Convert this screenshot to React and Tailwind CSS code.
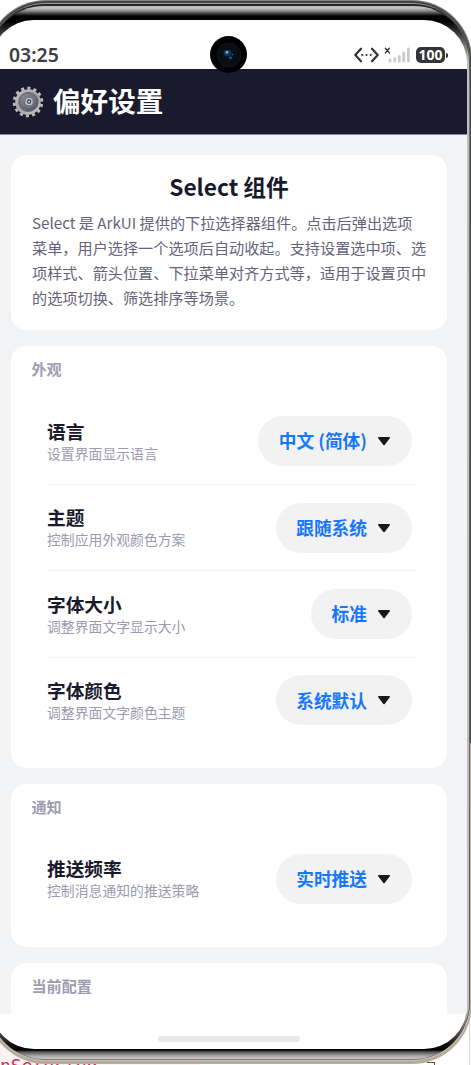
import React from "react";

function Gear() {
  return (
    <svg className="h-8 w-8 shrink-0" viewBox="0 0 32 32">
      <defs>
        <linearGradient id="rim" x1="0" y1="0" x2="1" y2="1">
          <stop offset="0" stopColor="#c5c3c4" />
          <stop offset="0.5" stopColor="#a5a3a5" />
          <stop offset="1" stopColor="#c9c5c5" />
        </linearGradient>
        <linearGradient id="plate" x1="0" y1="0" x2="1" y2="1">
          <stop offset="0" stopColor="#8f929b" />
          <stop offset="1" stopColor="#4a5161" />
        </linearGradient>
      </defs>
      <g transform="rotate(8 16 16)">
        <circle cx="16" cy="16" r="13.8" fill="none" stroke="#bdb9b9" strokeWidth="3" strokeDasharray="3.1 3.1" />
        <circle cx="16" cy="16" r="11.4" fill="#777b86" stroke="url(#rim)" strokeWidth="2.8" />
        <ellipse cx="16.8" cy="15.8" rx="9.4" ry="9.1" fill="url(#plate)" stroke="#5b5e69" strokeWidth="0.8" />
        <circle cx="16.6" cy="15.5" r="5.8" fill="none" stroke="#777c89" strokeWidth="1" />
        <circle cx="17" cy="15.5" r="3" fill="#3f4553" stroke="#c5c7cd" strokeWidth="1.4" />
        <circle cx="17" cy="15.5" r="1" fill="#e4e4e8" />
      </g>
    </svg>
  );
}

function StatusIcons() {
  return (
    <div className="flex items-center">
      <svg className="h-4 w-[25px]" viewBox="0 0 25 16" fill="none" stroke="#333436" strokeWidth="2.2" strokeLinecap="round" strokeLinejoin="round">
        <path d="M7 1.7 1.3 8 7 14.3M18 1.7 23.7 8 18 14.3" />
        <path d="M8.3 8h.01M12.5 8h.01M16.7 8h.01" strokeWidth="2.2" />
      </svg>
      <svg className="ml-[5px] h-4 w-[26px]" viewBox="0 0 26 16" fill="none" strokeLinecap="round">
        <path d="m1.4 1.3 4 4.6M5.4 1.3l-4 4.6" stroke="#333436" strokeWidth="1.4" />
        <path d="M6 13v1.2M10.8 11.6v2.6M15.3 9.3v4.9M19.7 5.8v8.4M24.4 2v12.2" stroke="#cacaca" strokeWidth="2.8" />
      </svg>
      <div className="ml-[6px] flex h-4 w-[29px] items-center justify-center rounded-[5px] bg-[#333436] font-['Noto_Sans',sans-serif] text-[14px] leading-none font-bold text-white">100</div>
      <div className="ml-px h-[5px] w-[2px] rounded-r bg-[#333436]" />
    </div>
  );
}

function Card({ title, className = "", children }) {
  return (
    <section className={`rounded-[15px] bg-white ${className}`}>
      <h3 className="px-[20.5px] pt-[11px] text-[15.1px] leading-[23px] font-bold text-[#9e9cb0]">{title}</h3>
      {children}
    </section>
  );
}

function Row({ label, hint, value, divided }) {
  return (
    <div className={`mr-[31px] ml-[36px] flex h-[86.4px] items-center justify-between border-b pr-[4px] ${divided ? "border-[#f3f3f5]" : "border-transparent"}`}>
      <div className="flex flex-col">
        <span className="mb-[2px] text-[18.7px] leading-[21px] font-bold text-[#1a1a2e]">{label}</span>
        <span className="text-[13.85px] leading-[20px] text-[#9c9aae]">{hint}</span>
      </div>
      <button className="flex h-[50px] items-center gap-[10px] rounded-full bg-[#f2f2f2] pr-[21px] pl-[20.5px] text-[17.7px] leading-none font-bold text-[#1677ff]">
        <span className="whitespace-nowrap">{value}</span>
        <svg className="h-[10px] w-[14px]" viewBox="0 0 14 10">
          <path d="M1.8 1.8h10.4L7 8.4Z" fill="#191919" stroke="#191919" strokeWidth="1.6" strokeLinejoin="round" />
        </svg>
      </button>
    </div>
  );
}

const appearance = [
  ["语言", "设置界面显示语言", "中文 (简体)"],
  ["主题", "控制应用外观颜色方案", "跟随系统"],
  ["字体大小", "调整界面文字显示大小", "标准"],
  ["字体颜色", "调整界面文字颜色主题", "系统默认"],
];

function Screen() {
  return (
    <div className="relative flex h-[1029px] w-[476px] flex-col overflow-hidden rounded-[43px] bg-white">
      <div className="flex h-[49px] shrink-0 items-end justify-between pr-[19px] pb-[3px] pl-[18px]">
        <span className="font-['Noto_Sans',sans-serif] text-[19.4px] leading-[23px] font-semibold text-[#3c3d3f]">03:25</span>
        <div className="pb-[3px]"><StatusIcons /></div>
      </div>
      <header className="flex h-[66px] shrink-0 items-center gap-[9px] border-b border-[#8e8e98] bg-[#1a1a2e] pl-[21px]">
        <Gear />
        <h1 className="pb-[4px] text-[27.6px] leading-[32px] font-bold text-white">偏好设置</h1>
      </header>
      <main className="flex h-[879px] shrink-0 flex-col gap-[16px] overflow-hidden bg-[#f1f3f5] px-[20px] pt-[20px]">
        <section className="h-[175px] shrink-0 rounded-[15px] bg-white px-[21px] pt-[17px]">
          <h2 className="text-center text-[22.7px] leading-[30px] font-bold text-[#1a1a2e]">Select 组件</h2>
          <p className="mt-[8px] text-[15.17px] leading-[25px] whitespace-nowrap text-[#65637a]">
            Select 是 ArkUI 提供的下拉选择器组件。点击后弹出选项<br />
            菜单，用户选择一个选项后自动收起。支持设置选中项、选<br />
            项样式、箭头位置、下拉菜单对齐方式等，适用于设置页中<br />
            的选项切换、筛选排序等场景。
          </p>
        </section>
        <Card title="外观" className="h-[422px] shrink-0">
          <div className="mt-[18.6px]">
            {appearance.map(([label, hint, value], i) => (
              <Row key={label} label={label} hint={hint} value={value} divided={i < 3} />
            ))}
          </div>
        </Card>
        <Card title="通知" className="h-[163px] shrink-0">
          <div className="mt-[18.2px]">
            <Row label="推送频率" hint="控制消息通知的推送策略" value="实时推送" />
          </div>
        </Card>
        <Card title="当前配置" className="h-[180px] shrink-0" />
      </main>
      <div className="mt-[21.5px] h-[6px] w-[142px] shrink-0 self-center rounded-full bg-[#e9e9e9]" />
      <div className="absolute top-[16px] left-[219px] flex h-[37px] w-[37px] items-center justify-center rounded-full bg-black">
        <svg className="h-[30px] w-[30px]" viewBox="0 0 30 30">
          <circle cx="15" cy="15" r="12" fill="#0c0d10" stroke="#121417" />
          <circle cx="15" cy="15" r="7.5" fill="#07101c" />
          <ellipse cx="13.5" cy="13" rx="4" ry="3.3" fill="#123556" />
          <circle cx="13" cy="12.3" r="1.4" fill="#6fb4e8" />
          <circle cx="16.5" cy="17.8" r="1.5" fill="#19548c" />
          <circle cx="18.5" cy="14.6" r="0.8" fill="#2a5c88" />
        </svg>
      </div>
    </div>
  );
}

export default function App() {
  return (
    <div className="relative h-[1065px] w-[471px] overflow-hidden bg-white font-['Noto_Sans_CJK_SC',sans-serif]">
      <div className="absolute bottom-0 left-0 h-[60px] w-[200px] overflow-hidden bg-[#faf3f5]">
        <span className="absolute top-[51px] left-0 font-['DejaVu_Sans_Mono',monospace] text-[18px] leading-[20px] whitespace-nowrap text-[#d52b5d]">nSelected</span>
      </div>
      <div className="absolute right-[1px] bottom-0 h-[60px] w-px bg-[#d6d6d8]" />
      <div className="absolute right-[36px] bottom-0 h-[3px] w-[8px] border-t border-r border-[#555]" />
      <div className="absolute top-0 left-[-14px] w-[486px] rounded-[60px] bg-linear-to-b from-[#80857f] from-0% via-[#55595a] via-70% to-[#b5ac9c] to-70% pt-px pr-px pb-[3px] pl-px">
        <div className="rounded-[59px] bg-linear-to-b from-[#444644] from-70% to-[#c6beae] to-70% pt-[2px] pr-px pb-px pl-px">
          <div className="rounded-[58px] bg-linear-to-b from-[#969896] to-[#817c73] pt-px pb-px">
            <div className="rounded-[57px] bg-linear-to-b from-[#242524] from-0% via-[#777] via-8% to-[#555] pt-[2px] pr-px pl-px">
              <div className="rounded-[55px] bg-[linear-gradient(180deg,#b8b8b8_0px,#c4c4c4_2px,#888_5px,#333_8px,#000_10px,#000_15px,#bfc0c1_55px,#bfc0c1_calc(100%_-_50px),#111_calc(100%_-_14px),#000_calc(100%_-_9px),#555_calc(100%_-_7px),#aaa_calc(100%_-_3px),#ccc_100%)] pt-[14px] pr-[2px] pb-[10px] pl-[2px]">
                <Screen />
              </div>
            </div>
          </div>
        </div>
      </div>
    </div>
  );
}
